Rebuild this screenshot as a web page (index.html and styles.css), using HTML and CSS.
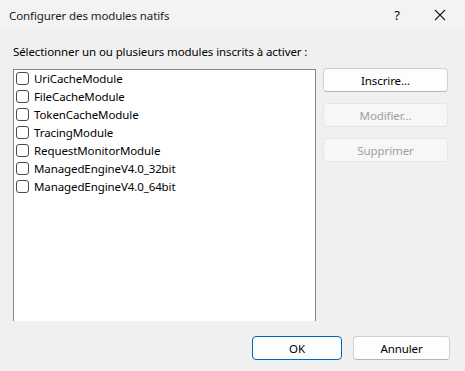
FILE: index.html
```html
<!DOCTYPE html>
<html lang="fr">
<head>
<meta charset="utf-8">
<link rel="stylesheet" href="styles.css">
</head>
<body>
<div class="dialog">
  <div class="titlebar">
    <span class="title">Configurer des modules natifs</span>
    <span class="help">?</span>
    <span class="close">
      <svg width="12" height="12" viewBox="0 0 12 12"><path d="M1 1L11 11M11 1L1 11" stroke="#1a1a1a" stroke-width="1.1" fill="none"/></svg>
    </span>
  </div>
  <div class="content">
    <div class="label">Sélectionner un ou plusieurs modules inscrits à activer :</div>
    <div class="main">
      <div class="list">
        <div class="items">
          <label class="item"><span class="cb"></span>UriCacheModule</label>
          <label class="item"><span class="cb"></span>FileCacheModule</label>
          <label class="item"><span class="cb"></span>TokenCacheModule</label>
          <label class="item"><span class="cb"></span>TracingModule</label>
          <label class="item"><span class="cb"></span>RequestMonitorModule</label>
          <label class="item"><span class="cb"></span>ManagedEngineV4.0_32bit</label>
          <label class="item"><span class="cb"></span>ManagedEngineV4.0_64bit</label>
        </div>
      </div>
      <div class="side">
        <button class="btn">Inscrire...</button>
        <button class="btn disabled">Modifier...</button>
        <button class="btn disabled">Supprimer</button>
      </div>
    </div>
    <div class="footer">
      <button class="btn primary ok">OK</button>
      <button class="btn cancel">Annuler</button>
    </div>
  </div>
</div>
</body>
</html>
```
FILE: styles.css
```css
* { box-sizing: border-box; }
html, body { margin: 0; padding: 0; }
body {
  width: 465px;
  height: 371px;
  background: #f0f0f0;
  font-family: "Noto Sans", "Open Sans", sans-serif;
  font-size: 11.5px;
  letter-spacing: -0.1px;
  color: #000;
  overflow: hidden;
}
.dialog { width: 465px; height: 371px; display: flex; flex-direction: column; }
.titlebar {
  height: 30px;
  background: #f3f3f3;
  display: flex;
  align-items: center;
  padding-left: 9px;
}
.title { flex: 1; color: #1a1a1a; }
.help { width: 16px; text-align: center; margin-right: 29px; font-size: 13px; }
.close { width: 14px; display: flex; align-items: center; margin-right: 17px; }
.content { flex: 1; display: flex; flex-direction: column; padding: 13px 14px 0 13px; }
.label { height: 17px; line-height: 17px; }
.main { display: flex; margin-top: 9px; }
.list {
  width: 303px;
  height: 252px;
  background: #fff;
  border: 1px solid #828790;
  border-bottom: none;
  padding: 0 0 0 2px;
}
.items { display: flex; flex-direction: column; margin-top: -1px; }
.item {
  height: 18.1px;
  display: flex;
  align-items: center;
  gap: 5px;
  color: #000;
}
.cb {
  width: 13px;
  height: 13px;
  border: 1px solid #4a4a4a;
  border-radius: 3px;
  background: #fff;
  flex: none;
}
.side { display: flex; flex-direction: column; gap: 11px; margin-left: 7px; margin-top: -1px; }
.btn {
  font: inherit;
  letter-spacing: inherit;
  width: 125px;
  height: 24px;
  background: #fdfdfd;
  border: 1px solid #d0d0d0;
  border-bottom-color: #b5b5b5;
  border-radius: 4px;
  color: #000;
  padding: 0;
}
.btn.disabled {
  background: #f7f7f7;
  border: 1px solid #e5e5e5;
  color: #a0a0a0;
}
.footer { display: flex; justify-content: flex-end; gap: 11px; margin-top: 15px; padding-right: 1px; }
.ok { width: 90px; }
.cancel { width: 97px; }
.btn.primary { border: 1px solid #0067c0; }
```
